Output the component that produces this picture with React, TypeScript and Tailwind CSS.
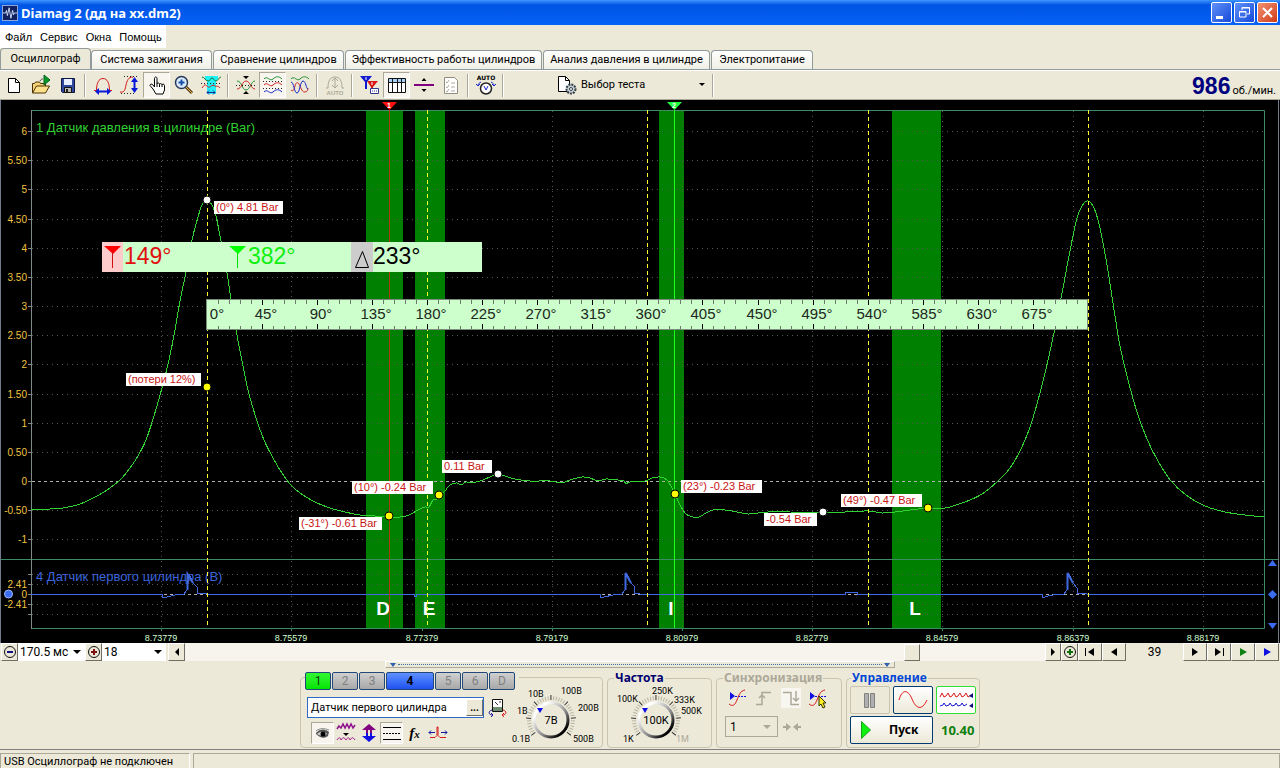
import React from "react";

const TABS = [
  { name: "Система зажигания", width: "w-[121px]" },
  { name: "Сравнение цилиндров", width: "w-[131px]" },
  { name: "Эффективность работы цилиндров", width: "w-[197px]" },
  { name: "Анализ давления в цилиндре", width: "w-[167px]" },
  { name: "Электропитание", width: "w-[102px]" },
];

const Y_TICKS = [
  { y: 131, label: "6" },
  { y: 160, label: "5.50" },
  { y: 189, label: "5" },
  { y: 219, label: "4.50" },
  { y: 248, label: "4" },
  { y: 277, label: "3.50" },
  { y: 306, label: "3" },
  { y: 335, label: "2.50" },
  { y: 364, label: "2" },
  { y: 394, label: "1.50" },
  { y: 423, label: "1" },
  { y: 452, label: "0.50" },
  { y: 481, label: "0" },
  { y: 510, label: "-0.50" },
  { y: 539, label: "-1" },
  { y: 574, label: "" },
  { y: 584, label: "2.41" },
  { y: 594, label: "0" },
  { y: 604, label: "-2.41" },
  { y: 614, label: "" },
];

const X_TICKS = [
  { x: 161, label: "8.73779" },
  { x: 291, label: "8.75579" },
  { x: 422, label: "8.77379" },
  { x: 552, label: "8.79179" },
  { x: 682, label: "8.80979" },
  { x: 812, label: "8.82779" },
  { x: 942, label: "8.84579" },
  { x: 1073, label: "8.86379" },
  { x: 1203, label: "8.88179" },
];

const BANDS = [
  { x: 366, w: 37, letter: "D", lx: 383 },
  { x: 415, w: 30, letter: "E", lx: 429 },
  { x: 659, w: 25, letter: "I", lx: 671 },
  { x: 892, w: 49, letter: "L", lx: 915 },
];

const CALLOUTS = [
  { x: 214, y: 201, w: 69, text: "(0°) 4.81 Bar", px: 207, py: 200, fill: "#fff" },
  { x: 126, y: 373, w: 75, text: "(потери 12%)", px: 207, py: 387, fill: "#ff0" },
  { x: 299, y: 517, w: 83, text: "(-31°) -0.61 Bar", px: 389, py: 516, fill: "#ff0" },
  { x: 352, y: 481, w: 81, text: "(10°) -0.24 Bar", px: 439, py: 495, fill: "#ff0" },
  { x: 442, y: 460, w: 50, text: "0.11 Bar", px: 498, py: 474, fill: "#fff" },
  { x: 681, y: 480, w: 81, text: "(23°) -0.23 Bar", px: 675, py: 494, fill: "#ff0" },
  { x: 764, y: 513, w: 53, text: "-0.54 Bar", px: 823, py: 512, fill: "#fff" },
  { x: 841, y: 494, w: 81, text: "(49°) -0.47 Bar", px: 928, py: 508, fill: "#ff0" },
];

const PRESSURE: number[][] = [
  [31, 510], [50, 509], [63, 508], [80, 504], [95, 497], [107, 490], [120, 480], [130, 468], [138, 456], [146, 440],
  [154, 416], [162, 388], [169, 360], [175, 330], [180, 301], [186, 272], [192, 240], [198, 217], [202, 205], [207, 200],
  [212, 205], [216, 216], [221, 241], [227, 273], [231, 299], [237, 335], [242, 361], [248, 390], [256, 418], [264, 440],
  [272, 456], [280, 470], [290, 484], [300, 493], [315, 502], [330, 508], [345, 512], [360, 515], [375, 516], [389, 517],
  [400, 517], [409, 515], [418, 510], [425, 507], [429, 507], [433, 500], [437, 499], [440, 495], [445, 491], [448, 487],
  [452, 484], [457, 483], [461, 485], [466, 482], [470, 483], [480, 481], [490, 477], [498, 474], [505, 476], [515, 479],
  [530, 481], [550, 481], [562, 483], [570, 480], [582, 477], [590, 478], [598, 481], [606, 479], [618, 480], [624, 481],
  [626, 484], [630, 482], [645, 481], [652, 478], [660, 477], [667, 480], [674, 492], [680, 505], [686, 514], [693, 517],
  [699, 517], [706, 513], [713, 510], [725, 510], [737, 512], [748, 514], [758, 513], [768, 512], [790, 512], [823, 513],
  [845, 512], [868, 511], [882, 513], [895, 512], [910, 510], [928, 508], [945, 508], [965, 502], [982, 494], [998, 481],
  [1010, 468], [1020, 451], [1029, 430], [1037, 404], [1046, 369], [1055, 328], [1063, 288], [1069, 256], [1076, 222],
  [1082, 206], [1088, 201], [1094, 208], [1100, 228], [1107, 265], [1113, 303], [1120, 346], [1128, 380], [1137, 412],
  [1147, 439], [1158, 461], [1171, 481], [1186, 495], [1205, 506], [1225, 512], [1245, 515], [1264, 517],
];

const PULSES =
  "M31 594H162V598L167 597L175 595L184 594L187 590V574H189L193 583L197 587V593H206L207 594H414V596H416V594H600V598L604 597L613 595L622 594L625 590V573L627 574L631 583L634 586V593H639L640 594H845V592H857V594H1042V598L1048 596L1058 594H1064L1067 590V573L1069 574L1073 583L1077 588V593H1086L1087 594H1264";

// Catmull-Rom through the samples
const smooth = (p: number[][]) => {
  let d = `M${p[0][0]} ${p[0][1]}`;
  for (let i = 0; i < p.length - 1; i++) {
    const a = p[i - 1] || p[i];
    const b = p[i];
    const c = p[i + 1];
    const e = p[i + 2] || c;
    d += `C${b[0] + (c[0] - a[0]) / 6} ${b[1] + (c[1] - a[1]) / 6} ${c[0] - (e[0] - b[0]) / 6} ${c[1] - (e[1] - b[1]) / 6} ${c[0]} ${c[1]}`;
  }
  return d;
};

const Icon: React.FC<{ children: React.ReactNode }> = ({ children }) => (
  <svg viewBox="0 0 20 20" className="h-5 w-5 shrink-0 overflow-visible" fill="none" aria-hidden="true">
    {children}
  </svg>
);

const ToolButton: React.FC<{ label: string; pressed?: boolean; children: React.ReactNode }> = ({
  label,
  pressed,
  children,
}) => (
  <button
    type="button"
    aria-label={label}
    className={
      pressed
        ? "flex h-[26px] w-[27px] items-center justify-center border border-[#aca899] border-r-white border-b-white bg-[#f7f5ee]"
        : "flex h-[26px] w-[27px] items-center justify-center"
    }
  >
    <Icon>{children}</Icon>
  </button>
);

const Separator = () => (
  <div className="flex w-2 justify-center pt-0.5">
    <div className="h-[23px] w-[2px] border-l border-[#aca899] border-r border-r-white" />
  </div>
);

const Toolbar = () => (
  <div className="flex h-[30px] items-start border-t border-white border-b border-b-[#aca899] pt-px">
    <ToolButton label="Новый">
      <path d="M4.500 3.500h7l4 4v10h-11z" fill="#fff" stroke="#000" />
      <path d="M11.500 3.500v4h4" stroke="#000" />
    </ToolButton>
    <ToolButton label="Открыть">
      <path d="M1.500 18V8.500h2l1-1.500h4l1 1.500h5V11" fill="#f5d27a" stroke="#4a3200" />
      <path d="M1.500 18l4-7h13l-4 7z" fill="#ffe08a" stroke="#4a3200" />
      <path d="M13 0v10l6-5z" fill="#0a9a28" stroke="#04601a" />
      <path d="M9 6c1-2 2-2 3-2" stroke="#444" />
    </ToolButton>
    <ToolButton label="Сохранить">
      <path d="M3.500 3.500h13v14h-12l-1-1z" fill="#3048a0" stroke="#101840" />
      <path d="M6 4h8v6H6z" fill="#e8f0ff" />
      <path d="M6.500 12.500h7v5h-7z" fill="#b8b8b0" stroke="#111" />
      <path d="M8 14h2v3H8z" fill="#222" />
    </ToolButton>
    <Separator />
    <ToolButton label="Ширина">
      <path d="M1 15.500h2.500c0-7 2-12 6.500-12s6.500 5 6.500 12H19" stroke="#d81818" />
      <path d="M5 16.500h10" stroke="#0818d8" strokeWidth="2" />
      <path d="M6 13v7l-4-3.500zM14 13v7l4-3.500z" fill="#0818d8" />
    </ToolButton>
    <ToolButton label="Амплитуда">
      <path d="M4 1.500h13M1 18.500h15" stroke="#222" strokeDasharray="1 2" />
      <path d="M0 17c5 1 5-3 6-7s2-8 7-8" stroke="#d81818" />
      <path d="M14.500 5v10" stroke="#0818d8" strokeWidth="2" />
      <path d="M11 7h7l-3.500-5zM11 13h7l-3.500 5z" fill="#0818d8" />
    </ToolButton>
    <ToolButton label="Рука" pressed>
      <path
        d="M7.500 12V3.500c0-2 2.500-2 2.500 0V9c0-1.500 2.500-1.500 2.500.5 0-1.500 2.500-1 2.500.5 0-1.500 2.500-1 2.500.5v4.500l-1.500 4h-7l-3-5-3-3.500c0-2 2-1.500 3-.5z"
        fill="#fff"
        stroke="#000"
      />
      <path d="M10 9v3m2.500-2.500V12m2.500-2v2" stroke="#000" />
    </ToolButton>
    <ToolButton label="Масштаб">
      <path d="M12 12l6 6" stroke="#5a3c10" strokeWidth="3" />
      <path d="M12 12l6 6" stroke="#e8b850" />
      <circle cx="7.500" cy="7.500" r="6" fill="#dcecff" stroke="#283858" strokeWidth="1.500" />
      <path d="M4.500 7.500h6m-3-3v6" stroke="#1850a8" strokeWidth="2" />
    </ToolButton>
    <ToolButton label="Область">
      <path d="M4 1h13v3l-2 2v13H6V6L4 4z" fill="#20f0f8" />
      <path d="M1 2c3 0 3 4 6 4s2-3 4-3 2 3 4 3 3-4 5-4" stroke="#107830" />
      <path d="M0 8.500h20" stroke="#222" strokeDasharray="1 2" />
      <path d="M1 13c2-3 3-4 5-2s3 1 4 0 3-1 4 0 3-1 5 2" stroke="#c82020" />
      <path d="M6 17.500h8m-6-2l-2 2 2 2m4-4l2 2-2 2" stroke="#202898" />
    </ToolButton>
    <Separator />
    <ToolButton label="Совместить">
      <path d="M7 1h6l-3 3zM7 19h6l-3-3z" fill="#000" />
      <path d="M1 6c5 0 5 9 9 9s5-9 9-9" stroke="#209030" />
      <path d="M1 14c5 0 5-8 9-8s5 8 9 8" stroke="#d02020" />
      <path d="M0 10.500h20" stroke="#222" strokeDasharray="1 2" />
    </ToolButton>
    <ToolButton label="Разнести" pressed>
      <path d="M1 4c3-4 6 3 9 0s6-3 9 0" stroke="#209030" />
      <path d="M0 6.500h20M0 13.500h20" stroke="#222" strokeDasharray="1 2" />
      <path d="M1 10c3-4 6 3 9 0s6-3 9 0" stroke="#d02020" />
      <path d="M1 17c3-4 6 3 9 0s6-3 9 0" stroke="#1828c8" />
    </ToolButton>
    <ToolButton label="Наложить">
      <path d="M1 4c3-4 6 3 9 0s6-3 9 0" stroke="#209030" />
      <path d="M1 15c2 2 3 0 4-4s3-5 5 0 3 6 5 6 3-2 3-4" stroke="#d02020" />
      <path d="M1 7c3 0 3 11 6 11s3-12 6-12 3 8 5 8" stroke="#1828c8" />
    </ToolButton>
    <Separator />
    <ToolButton label="Авто">
      <path d="M1 13h2C3 6 5 2 10 2s7 4 7 11h2M10 4v9M7 6l3-3 3 3M7 10l3 3 3-3" stroke="#aca899" />
      <text x="10" y="20" fontSize="6" fontWeight="bold" fill="#aca899" textAnchor="middle" fontFamily="Liberation Sans, sans-serif">
        AUTO
      </text>
    </ToolButton>
    <Separator />
    <ToolButton label="Маркеры">
      <path d="M0 1h12L7 7v7H5V7z" fill="#1018d0" />
      <path d="M7 6h11l-5 6v4h-2v-4z" fill="#d81818" />
      <path d="M6 2v3M12 7v3" stroke="#fff" />
      <path d="M10.500 13.500h8v5h-8z" fill="#fff" stroke="#303890" />
      <path d="M12 16h5" stroke="#303890" strokeDasharray="1 1" />
    </ToolButton>
    <ToolButton label="Таблица" pressed>
      <path d="M1.500 3.500h17v14h-17z" fill="#fff" stroke="#111" />
      <path d="M2 4h16v3H2z" fill="#a8d0f8" />
      <path d="M1.500 7.500h17M5.500 4v13M10.500 4v13M14.500 4v13" stroke="#111" />
    </ToolButton>
    <ToolButton label="Линия">
      <path d="M0 10h20" stroke="#800080" strokeWidth="2" />
      <path d="M7.500 6h5L10 3zM7.500 14h5L10 17z" fill="#000" />
    </ToolButton>
    <ToolButton label="Отчёт">
      <path d="M3.500 2.500h10l3 3v13h-13z" fill="#fff" stroke="#908c80" />
      <path d="M5 7l1 1 2-3M5 12l1 1 2-3M5 16l1 1 2-3M10 8h4M10 12h4M10 16h4" stroke="#b0ac9c" />
    </ToolButton>
    <Separator />
    <ToolButton label="Автоматически">
      <text x="10" y="5" fontSize="6" fontWeight="bold" textAnchor="middle" fill="#000" fontFamily="DejaVu Sans, sans-serif">
        AUTO
      </text>
      <circle cx="10" cy="13.500" r="5.500" fill="#fff" stroke="#222" strokeWidth="1.500" />
      <path d="M8 11l2 4 2-4" stroke="#1828c8" />
      <path d="M2 11c0-2 1-3 3-4m13 4c0-2-1-3-3-4M0 9l2 2 2-2m12 0l2 2 2-2" stroke="#1828c8" />
    </ToolButton>
    <Separator />
    <button type="button" className="ml-[50px] flex h-[26px] w-[152px] items-center gap-1 pr-1">
      <Icon>
        <path d="M1.500 1.500h7l4 4v11h-11z" fill="#fff" stroke="#000" />
        <path d="M8.500 1.500v4h4" stroke="#000" />
        <circle cx="14" cy="14" r="4.500" fill="#c8d0d4" stroke="#304048" strokeWidth="2" strokeDasharray="2 1" />
        <circle cx="14" cy="14" r="1.500" fill="#fff" stroke="#304048" />
      </Icon>
      <span>Выбор теста</span>
      <svg viewBox="0 0 6 4" className="ml-auto h-1 w-1.5">
        <path d="M0 0h6L3 3z" />
      </svg>
    </button>
    <Separator />
    <div className="ml-auto flex items-baseline gap-[2px] pt-0.5 pr-1">
      <output className="font-['Liberation_Sans',sans-serif] text-[23px] leading-6 font-bold text-[#000080]">986</output>
      <span>об./мин.</span>
    </div>
  </div>
);

const Chart = () => (
  <svg
    viewBox="0 100 1280 543"
    className="block h-auto w-full bg-black font-['Liberation_Sans',Arial,sans-serif]"
    role="img"
    aria-label="Осциллограмма"
  >
    <path d="M0.500 100V643M1278.500 100V643" stroke="#707c8c" />
    {BANDS.map((b) => (
      <rect key={b.letter} x={b.x} y="111" width={b.w} height="517" fill="#008000" />
    ))}

    {/* grid */}
    {Y_TICKS.map((t) => (
      <g key={t.y}>
        <path
          d={`M32 ${t.y + 0.5}H1264`}
          stroke={t.y === 481 || t.y === 594 ? "#b0b0b0" : "#505850"}
          strokeDasharray={t.y === 481 || t.y === 594 ? "3 3" : "1 4"}
        />
        <path d={`M28 ${t.y + 0.5}h4`} stroke="#808a86" />
        <text x="27" y={t.y + 4} fontSize="10" fill="#f0c440" textAnchor="end">
          {t.label}
        </text>
      </g>
    ))}
    {X_TICKS.map((t) => (
      <g key={t.x}>
        <path d={`M${t.x + 0.5} 111V628`} stroke="#505850" strokeDasharray="1 4" />
        <path d={`M${t.x + 0.5} 628v3`} stroke="#3c8c64" />
        <text x={t.x} y="641" fontSize="9" fill="#d0ffd0" textAnchor="middle">
          {t.label}
        </text>
      </g>
    ))}
    <path d="M31 110.500H1264.500V628.500H31M1 559.500H1278" stroke="#3c8c64" fill="none" />
    <path d="M31.500 110V629" stroke="#808a86" />

    {/* channel names */}
    <text x="36" y="132" fontSize="13" fill="#32d232">
      1 Датчик давления в цилиндре (Bar)
    </text>
    <text x="36" y="581" fontSize="13" fill="#3c64dc">
      4 Датчик первого цилиндра (В)
    </text>

    <path d={smooth(PRESSURE)} stroke="#32d232" fill="none" shapeRendering="crispEdges" />
    <path d={PULSES} stroke="#4169e1" fill="none" shapeRendering="crispEdges" />
    <path
      d="M187.500 590V574L193 583M625.500 590V573L631 583M1067.500 590V573L1073 583"
      stroke="#4169e1"
      strokeWidth="2"
      fill="none"
    />

    {BANDS.map((b) => (
      <text key={b.letter} x={b.lx} y="615" fontSize="19" fontWeight="bold" fill="#fff" textAnchor="middle">
        {b.letter}
      </text>
    ))}

    {[207, 427, 647, 868, 1088].map((x) => (
      <path key={x} d={`M${x + 0.5} 110V628`} stroke="#ffff30" strokeDasharray="4 3" shapeRendering="crispEdges" />
    ))}

    {/* cursors */}
    <path d="M389.500 110V628" stroke="#b03808" shapeRendering="crispEdges" />
    <path d="M674.500 110V628" stroke="#20ff20" shapeRendering="crispEdges" />
    <path d="M382 102h15l-7.500 8z" fill="#ff1010" />
    <path d="M667 102h15l-7.500 8z" fill="#20ff40" />
    <text x="389" y="108" fontSize="7" fontWeight="bold" fill="#fff" textAnchor="middle">
      1
    </text>
    <text x="674" y="108" fontSize="7" fontWeight="bold" fill="#fff" textAnchor="middle">
      2
    </text>

    {CALLOUTS.map((c) => (
      <g key={c.text}>
        <rect x={c.x} y={c.y} width={c.w} height="13" fill="#fff" />
        <text x={c.x + 2} y={c.y + 10} fontSize="11" fill="#c81414">
          {c.text}
        </text>
        <circle cx={c.px} cy={c.py} r="4" fill={c.fill} stroke="#000" />
      </g>
    ))}

    {/* cursor readout */}
    <rect x="102" y="242" width="380" height="30" fill="#ccffcc" />
    <rect x="102" y="242" width="21" height="30" fill="#ffcccc" />
    <rect x="351" y="242" width="22" height="30" fill="#cccccc" />
    <path d="M104 246h17l-8 8z" fill="#ff0000" />
    <path d="M112.500 252v16" stroke="#d01010" />
    <path d="M229 246h17l-8 8z" fill="#00ff00" />
    <path d="M237.500 252v16" stroke="#00e000" />
    <path d="M355.500 267.500h13l-6-16z" stroke="#000" fill="none" />
    <text x="124" y="264" fontSize="23" fill="#e01010">
      149°
    </text>
    <text x="248" y="264" fontSize="23" fill="#10f010">
      382°
    </text>
    <text x="373" y="264" fontSize="23" fill="#000">
      233°
    </text>

    {/* degree ruler */}
    <rect x="206.500" y="299.500" width="881" height="30" fill="#ccffcc" stroke="#7c8c7c" />
    {Array.from({ length: 79 }, (_, i) => {
      const x = Math.round(207 + (i + 1) * 11.01) + 0.5;
      const major = (i + 1) % 5 === 0;
      return (
        <path
          key={i}
          d={major ? `M${x} 300v5M${x} 324v5` : `M${x} 300v4M${x} 326v3`}
          stroke={major ? "#000" : "#6c7c6c"}
        />
      );
    })}
    {Array.from({ length: 16 }, (_, i) => (
      <text
        key={i}
        x={i === 0 ? 217 : Math.round(207 + i * 55.05) + 4}
        y="319"
        fontSize="15"
        fill="#202820"
        textAnchor="middle"
      >
        {i * 45}°
      </text>
    ))}

    {/* channel offset handles */}
    <circle cx="8.500" cy="594" r="4" fill="#3c6cf0" stroke="#a0b8f8" />
    <path d="M1268 566h9l-4.500-6zM1268 623h9l-4.500 6zM1268 594.500l4.500-4.500 4.500 4.500-4.500 4.500z" fill="#3c6cf0" />
  </svg>
);

const NavButton: React.FC<{ label: string; width: string; d: string; fill?: string }> = ({
  label,
  width,
  d,
  fill = "#000",
}) => (
  <button
    type="button"
    aria-label={label}
    className={`flex h-[18px] ${width} items-center justify-center border border-white border-r-[#716f64] border-b-[#716f64] bg-[#ece9d8]`}
  >
    <svg viewBox="0 0 10 10" className="h-2.5 w-2.5 shrink-0" fill={fill}>
      <path d={d} />
    </svg>
  </button>
);

const ZoomButton: React.FC<{ label: string; color: string; d: string }> = ({ label, color, d }) => (
  <button
    type="button"
    aria-label={label}
    className="flex h-[18px] w-[17px] items-center justify-center border border-white border-r-[#716f64] border-b-[#716f64] bg-[#ece9d8]"
  >
    <svg viewBox="0 0 14 14" className="h-3.5 w-3.5 shrink-0" fill="none">
      <circle cx="7" cy="7" r="5.500" stroke="#111" />
      <path d={d} stroke={color} strokeWidth="2" />
    </svg>
  </button>
);

const ComboBox: React.FC<{ label: string; value: string; width: string }> = ({ label, value, width }) => (
  <div className={`grid h-[18px] ${width} items-center bg-white`}>
    <select aria-label={label} className="col-start-1 row-start-1 h-full w-full appearance-none bg-transparent pl-[2px] text-[12px]">
      <option>{value}</option>
    </select>
    <svg viewBox="0 0 8 4" className="pointer-events-none col-start-1 row-start-1 mr-1 h-1 w-2 justify-self-end">
      <path d="M0 0h8L4 4z" />
    </svg>
  </div>
);

const TimeBar = () => (
  <div className="flex h-[18px] items-center pl-px">
    <ZoomButton label="Уменьшить" color="#101080" d="M4 7h6" />
    <ComboBox label="Развёртка" value="170.5 мс" width="w-[67px]" />
    <ZoomButton label="Увеличить" color="#801010" d="M4 7h6M7 4v6" />
    <ComboBox label="Масштаб" value="18" width="w-[64px]" />
    <div className="w-[2px]" />
    <NavButton label="Влево" width="w-[17px]" d="M7 1v8L3 5z" />
    <input
      type="range"
      aria-label="Прокрутка"
      min="0"
      max="1000"
      defaultValue="852"
      className="h-[18px] min-w-0 flex-1 appearance-none bg-[#f6f4ec] [&::-webkit-slider-thumb]:h-[17px] [&::-webkit-slider-thumb]:w-4 [&::-webkit-slider-thumb]:appearance-none [&::-webkit-slider-thumb]:border [&::-webkit-slider-thumb]:border-white [&::-webkit-slider-thumb]:border-r-[#716f64] [&::-webkit-slider-thumb]:border-b-[#716f64] [&::-webkit-slider-thumb]:bg-[#ece9d8]"
    />
    <NavButton label="Вправо" width="w-4" d="M3 1v8l4-4z" />
    <ZoomButton label="Добавить" color="#107010" d="M4 7h6M7 4v6" />
    <NavButton label="В начало" width="w-6" d="M0 1h1v8H0zM9 1v8L3 5z" />
    <NavButton label="Назад" width="w-6" d="M8 1v8L2 5z" />
    <output className="w-[57px] text-center text-[12px]">39</output>
    <NavButton label="Вперёд" width="w-6" d="M2 1v8l6-4z" />
    <NavButton label="В конец" width="w-6" d="M9 1h1v8H9zM1 1v8l6-4z" />
    <NavButton label="Воспроизвести" width="w-6" d="M2 1v8l7-4z" fill="#108010" />
    <NavButton label="Запись" width="w-6" d="M2 1v8l7-4z" fill="#1010e0" />
    <div className="w-px" />
  </div>
);

const CHANNELS = [
  { name: "1", style: "w-[26px] bg-linear-to-b from-[#30f830] to-[#00e400] text-[#084008]" },
  { name: "2", style: "w-[26px] bg-linear-to-b from-[#d0d0d0] to-[#a8a8a8] text-[#808080]" },
  { name: "3", style: "w-[26px] bg-linear-to-b from-[#d0d0d0] to-[#a8a8a8] text-[#808080]" },
  { name: "4", style: "w-12 bg-linear-to-b from-[#6090ff] to-[#2050f0] font-bold text-black" },
  { name: "5", style: "w-[26px] bg-linear-to-b from-[#d0d0d0] to-[#a8a8a8] text-[#808080]" },
  { name: "6", style: "w-[26px] bg-linear-to-b from-[#d0d0d0] to-[#a8a8a8] text-[#808080]" },
  { name: "D", style: "w-[26px] bg-linear-to-b from-[#d0d0d0] to-[#a8a8a8] text-[#808080]" },
];

type Mark = { x: number; y: number; text: string; muted?: boolean };

const Knob: React.FC<{ cx: number; cy: number; value: string; marks: Mark[]; label: string; className: string; box: string }> = ({
  cx,
  cy,
  value,
  marks,
  label,
  className,
  box,
}) => (
  <svg viewBox={box} className={className} role="img" aria-label={label} fontSize="9">
    <defs>
      <linearGradient id={`rim-${value}`} x1="0" y1="0" x2="1" y2="1">
        <stop offset="0.200" stopColor="#fff" />
        <stop offset="0.600" stopColor="#888" />
        <stop offset="0.850" stopColor="#000" />
      </linearGradient>
    </defs>
    {Array.from({ length: 37 }, (_, i) => (
      <path
        key={i}
        d={`M${cx + 20} ${cy}h${i % 6 === 0 ? 5 : 4}`}
        stroke={i % 6 === 0 ? "#333" : "#b8b4a4"}
        transform={`rotate(${142 + i * 7.1} ${cx} ${cy})`}
      />
    ))}
    <circle cx={cx} cy={cy} r="17" fill="#ece9d8" stroke={`url(#rim-${value})`} strokeWidth="3" />
    <path d={`M${cx - 14} ${cy - 12}h6l-3 5z`} fill="#1010e0" />
    <text x={cx} y={cy + 4} fontSize="11" textAnchor="middle">
      {value}
    </text>
    {marks.map((m) => (
      <text key={m.text} x={m.x} y={m.y} fill={m.muted ? "#aca899" : "#000"}>
        {m.text}
      </text>
    ))}
  </svg>
);

const ChannelGroup = () => (
  <fieldset className="flex h-[76px] w-[303px] justify-between rounded border border-[#c8c4b0]">
    <legend className="ml-1 h-2.5 pr-1">
      <span className="flex gap-px">
        {CHANNELS.map((c) => (
          <button key={c.name} type="button" className={`h-[18px] rounded-xs border border-[#204878] text-[12px] leading-4 ${c.style}`}>
            {c.name}
          </button>
        ))}
      </span>
    </legend>
    <div className="flex flex-col gap-1 pt-[15px] pl-1.5">
      <div className="flex items-center gap-1">
        <div className="flex h-[21px] w-[177px] items-center border border-[#316ac5] bg-white">
          <input
            aria-label="Название канала"
            defaultValue="Датчик первого цилиндра"
            className="h-full min-w-0 flex-1 bg-transparent pl-[3px] outline-none"
          />
          <button
            type="button"
            aria-label="Выбрать датчик"
            className="h-[17px] w-[17px] border border-white border-r-[#716f64] border-b-[#716f64] bg-[#ece9d8] text-[10px] leading-2 font-bold"
          >
            ...
          </button>
        </div>
        <button type="button" aria-label="Сменить прибор">
          <Icon>
            <path d="M4.500 1.500h10v12h-10z" fill="#fff" stroke="#111" />
            <path d="M5 9h9v4H5z" fill="#708c70" />
            <path d="M7 4l3 3M11 4h2" stroke="#333" />
            <path d="M4 12c-4 1-4 5 1 5m-2-2l2 2-2 2" stroke="#1818a0" />
            <path d="M15 12c4 1 4 5-1 5m2-2l-2 2 2 2" stroke="#d81818" />
          </Icon>
        </button>
      </div>
      <div className="flex pl-1">
        <button
          type="button"
          aria-label="Показать"
          className="flex h-[22px] w-[23px] items-center justify-center border border-[#aca899] border-r-white border-b-white bg-[#f7f5ee]"
        >
          <Icon>
            <path d="M3 10c4-5 10-4 13-1l-1 4c-4 3-8 2-12-2z" fill="#555" />
            <path d="M4 11c3-3 8-3 10 0-3 3-7 2-10 0z" fill="#ccc" />
            <circle cx="10" cy="11" r="2.500" fill="#000" />
            <path d="M3 8c4-3 8-3 13-1" stroke="#888" />
          </Icon>
        </button>
        <button type="button" aria-label="Фильтр" className="flex h-[22px] w-[23px] items-center justify-center">
          <Icon>
            <path d="M1 6l2-3 2 2 2-4 2 4 2-4 2 4 2-4 2 4 2-3" stroke="#901090" strokeWidth="1.500" />
            <path d="M7 10h6l-3 3z" fill="#000" />
            <path d="M1 17c2-3 3-3 4 0 2-3 3-3 5 0 2-3 3-3 4 0 2-3 3-3 5 0" stroke="#a01890" />
          </Icon>
        </button>
        <button type="button" aria-label="Инверсия" className="flex h-[22px] w-[23px] items-center justify-center">
          <Icon>
            <path d="M10 1l7 6h-4v3H7V7H3z" fill="#800080" />
            <path d="M10 19l7-6h-4v-3H7v3H3z" fill="#1010e0" />
            <path d="M10 7v6" stroke="#ece9d8" strokeWidth="2" />
          </Icon>
        </button>
        <button
          type="button"
          aria-label="Линии"
          className="flex h-[22px] w-[23px] items-center justify-center border border-[#aca899] border-r-white border-b-white bg-[#f7f5ee]"
        >
          <Icon>
            <path d="M1 4.500h18M1 16.500h18" stroke="#000" />
            <path d="M1 10.500h18" stroke="#000" strokeDasharray="2 1" />
          </Icon>
        </button>
        <button type="button" className="h-[22px] w-[23px] font-['Liberation_Serif',serif] text-[15px] leading-5 font-bold italic">
          f<span className="text-[11px]">x</span>
        </button>
        <button type="button" aria-label="Синхроимпульс" className="flex h-[22px] w-[23px] items-center justify-center">
          <Icon>
            <path d="M2 14.500h5l2-2V4h1v8.500l2 2h6" stroke="#d81818" />
            <path d="M1 9.500h6m-4-2l-2 2 2 2M19 9.500h-6m4-2l2 2-2 2" stroke="#1018a0" />
          </Icon>
        </button>
      </div>
    </div>
    <Knob
      label="Диапазон"
      value="7В"
      cx={551}
      cy={721}
      box="510 684 92 62"
      className="mt-px h-[62px] w-[92px] overflow-visible"
      marks={[
        { x: 512, y: 743, text: "0.1В" },
        { x: 517, y: 715, text: "1В" },
        { x: 528, y: 698, text: "10В" },
        { x: 561, y: 695, text: "100В" },
        { x: 578, y: 712, text: "200В" },
        { x: 573, y: 743, text: "500В" },
      ]}
    />
  </fieldset>
);

const FrequencyGroup = () => (
  <fieldset className="h-[76px] w-[105px] rounded border border-[#c8c4b0]">
    <legend className="ml-1.5 h-3 px-px font-['Noto_Sans',sans-serif] text-[12px] leading-3 font-bold text-[#000070]">Частота</legend>
    <Knob
      label="Частота"
      value="100K"
      cx={656}
      cy={721}
      box="608 685 103 62"
      className="h-[62px] w-[103px] overflow-visible"
      marks={[
        { x: 623, y: 743, text: "1K" },
        { x: 617, y: 703, text: "100K" },
        { x: 652, y: 695, text: "250K" },
        { x: 674, y: 704, text: "333K" },
        { x: 681, y: 715, text: "500K" },
        { x: 676, y: 743, text: "1M", muted: true },
      ]}
    />
  </fieldset>
);

const SyncGroup = () => (
  <fieldset className="h-[76px] w-[126px] rounded border border-[#c8c4b0]">
    <legend className="ml-1.5 h-3 px-px font-['Noto_Sans',sans-serif] text-[12px] leading-3 font-bold text-[#aca899]">Синхронизация</legend>
    <div className="flex gap-[7px] pt-1 pl-2.5">
      <button type="button" aria-label="Уровень" className="h-5 w-5">
        <Icon>
          <path d="M3 4v8l5-4z" fill="#1010e0" />
          <path d="M8 8.500h11" stroke="#1010e0" strokeDasharray="2 1" />
          <path d="M2 16c4 3 6 1 8-4s3-9 8-10" stroke="#d81818" />
        </Icon>
      </button>
      <button type="button" aria-label="По фронту" disabled className="h-5 w-5">
        <Icon>
          <path d="M2 16.500h6v-12h9M8 7l-3 3M8 7l3 3" stroke="#aca899" strokeWidth="1.500" />
        </Icon>
      </button>
      <button type="button" aria-label="По спаду" disabled className="h-5 w-5 bg-[#f8f6f0]">
        <Icon>
          <path d="M2 4.500h8v12h8M15 3v10M12 10l3 3 3-3" stroke="#aca899" strokeWidth="1.500" />
        </Icon>
      </button>
      <button type="button" aria-label="Указать уровень" className="h-5 w-5">
        <Icon>
          <path d="M2 4v8l5-4z" fill="#1010e0" />
          <path d="M7 8.500h11" stroke="#1010e0" strokeDasharray="2 1" />
          <path d="M1 16c4 3 6 1 8-4s3-9 8-10" stroke="#d81818" />
          <path d="M11 8v10l2-2 2 4 2-1-2-4h3z" fill="#ffee20" stroke="#303000" />
        </Icon>
      </button>
    </div>
    <div className="flex items-center gap-1 pt-2 pl-2">
      <div className="grid h-[21px] w-[53px] items-center border border-[#aca899]">
        <select
          aria-label="Канал синхронизации"
          className="col-start-1 row-start-1 h-full w-full appearance-none bg-transparent pl-1 text-[12px]"
        >
          <option>1</option>
        </select>
        <svg viewBox="0 0 8 4" className="pointer-events-none col-start-1 row-start-1 mr-1.5 h-1 w-2 justify-self-end" fill="#aca899">
          <path d="M0 0h8L4 4z" />
        </svg>
      </div>
      <button type="button" aria-label="Сжать" disabled className="h-5 w-5">
        <Icon>
          <path d="M1 9h3V6l5 4-5 4v-3H1zM19 9h-3V6l-5 4 5 4v-3h3z" fill="#aca899" />
        </Icon>
      </button>
    </div>
  </fieldset>
);

const ControlGroup = () => (
  <fieldset className="h-[76px] w-[134px] rounded border border-[#c8c4b0]">
    <legend className="ml-1 h-3 px-px font-['Noto_Sans',sans-serif] text-[12px] leading-3 font-bold text-[#0046d5]">Управление</legend>
    <div className="flex flex-col gap-[2px] pt-[2px] pl-[3px]">
      <div className="flex gap-[3px]">
        <button type="button" aria-label="Пауза" className="flex h-7 w-10 items-center justify-center rounded-xs border border-[#c8c4b0]">
          <svg viewBox="0 0 12 15" className="h-[15px] w-3">
            <path d="M0.500 0.500h4v14h-4zM6.500 0.500h4v14h-4z" fill="#b0b0b0" stroke="#808080" />
          </svg>
        </button>
        <button
          type="button"
          aria-label="Осциллограмма"
          className="flex h-7 w-10 items-center justify-center rounded-xs border border-[#003c74] bg-linear-to-b from-white to-[#ece9d8]"
        >
          <svg viewBox="0 0 30 20" className="h-5 w-[30px]" fill="none">
            <path d="M1 10C4-1 10-1 14 9s10 12 15 1" stroke="#e01818" />
          </svg>
        </button>
        <button
          type="button"
          aria-label="Запись сигналов"
          className="flex h-7 w-10 items-center justify-center rounded-xs border border-[#30e030] bg-white"
        >
          <svg viewBox="0 0 34 20" className="h-5 w-[34px]" fill="none">
            <path d="M1 7l2-4 2 4 2-1 2-3 2 4 2-1 2-3 2 4 2-1 2-3 2 4 2-1 2-3 2 4 3-2" stroke="#d81818" />
            <path d="M1 16l3-1 1-2 2 3 3-1 1-2 2 3 3-1 1-2 2 3 3-1 1-2 2 3 3-2" stroke="#1818d0" />
            <path d="M34 3v5l-4-2zM34 13v5l-4-2z" fill="#101080" />
          </svg>
        </button>
      </div>
      <div className="flex items-center gap-2">
        <button
          type="button"
          className="flex h-7 w-[83px] items-center rounded-xs border border-[#003c74] bg-linear-to-b from-white to-[#ece9d8] pl-2.5 font-['Noto_Sans',sans-serif] text-[12px] font-bold"
        >
          <svg viewBox="0 0 10 18" className="mr-[18px] h-[18px] w-2.5">
            <path d="M0.500 0.500v17l9-8.500z" fill="#10f010" stroke="#18a018" />
          </svg>
          Пуск
        </button>
        <output className="font-['Noto_Sans',sans-serif] text-[13px] font-bold text-[#108010]">10.40</output>
      </div>
    </div>
  </fieldset>
);

const App: React.FC = () => {
  return (
    <div className="flex min-h-screen flex-col bg-[#ece9d8] font-['Roboto','Liberation_Sans',sans-serif] text-[11px] leading-4 text-black">
      {/* title */}
      <header className="flex h-[25px] items-center gap-[3px] bg-linear-to-b from-[#3d95ff] via-[#0054e3] via-20% to-[#0562f8] pr-[2px] pl-[2px]">
        <svg viewBox="0 0 16 16" className="h-4 w-4 border border-[#8ca8d8] bg-[#102060]" fill="none">
          <path d="M0 8h3l1-3 1 6 2-9 2 12 2-9 1 5 1-2h3" stroke="#dce8ff" />
        </svg>
        <h1 className="font-['Noto_Sans',sans-serif] text-[13px] font-bold text-white">Diamag 2 (дд на хх.dm2)</h1>
        <div className="ml-auto flex gap-[2px]">
          <button type="button" aria-label="Свернуть" className="h-[21px] w-[21px] rounded-xs border border-white bg-linear-to-br from-[#6090f8] to-[#1848d8]">
            <svg viewBox="0 0 19 19">
              <path d="M4 13h7v3H4z" fill="#fff" />
            </svg>
          </button>
          <button type="button" aria-label="Восстановить" className="h-[21px] w-[21px] rounded-xs border border-white bg-linear-to-br from-[#6090f8] to-[#1848d8]">
            <svg viewBox="0 0 19 19" fill="none" stroke="#fff">
              <path d="M7 7V4.500h7.500V11H12M4.500 8.500H11V14H4.500zM7 5h8M4 9h7" />
            </svg>
          </button>
          <button type="button" aria-label="Закрыть" className="h-[21px] w-[21px] rounded-xs border border-white bg-linear-to-br from-[#f09070] to-[#d03810]">
            <svg viewBox="0 0 19 19">
              <path d="M5 5l9 9M14 5l-9 9" stroke="#fff" strokeWidth="2" />
            </svg>
          </button>
        </div>
      </header>

      {/* menu */}
      <nav className="flex h-[23px] w-[166px] items-center gap-2 bg-white pl-[5px] font-['Liberation_Sans',sans-serif]">
        <button type="button">Файл</button>
        <button type="button">Сервис</button>
        <button type="button">Окна</button>
        <button type="button">Помощь</button>
      </nav>

      {/* tabs */}
      <div role="tablist" className="flex h-[22px] items-end border-b border-[#919b9c]">
        <button type="button" role="tab" aria-selected="true" className="h-[21px] w-[91px] rounded-t-sm border border-b-0 border-[#919b9c] bg-[#ece9d8]">
          Осциллограф
        </button>
        <div className="flex gap-px">
          {TABS.map((t) => (
            <button
              key={t.name}
              type="button"
              role="tab"
              aria-selected="false"
              className={`h-[19px] whitespace-nowrap rounded-t-sm border border-b-0 border-[#919b9c] bg-linear-to-b from-white to-[#f0efe6] ${t.width}`}
            >
              {t.name}
            </button>
          ))}
        </div>
      </div>

      <Toolbar />
      <Chart />
      <TimeBar />

      {/* splitter */}
      <div className="mx-auto flex h-[7px] w-[510px] items-center justify-between border border-[#aca899] border-t-white border-l-white px-1">
        <svg viewBox="0 0 6 4" className="h-1 w-1.5" fill="#3060b0">
          <path d="M0 0h6L3 4z" />
        </svg>
        <div className="h-0 w-[484px] border-t border-dotted border-[#4070a0]" />
        <svg viewBox="0 0 6 4" className="h-1 w-1.5" fill="#3060b0">
          <path d="M0 0h6L3 4z" />
        </svg>
      </div>

      <main className="flex justify-center gap-1 border-b border-[#808080] pt-1 pb-px">
        <ChannelGroup />
        <FrequencyGroup />
        <SyncGroup />
        <ControlGroup />
      </main>

      <footer className="mt-[3px] flex flex-1 gap-[3px]">
        <div className="w-[190px] border border-[#aca899] border-r-white border-b-white pl-[3px] whitespace-nowrap">
          USB Осциллограф не подключен
        </div>
        <div className="flex-1 border border-[#aca899] border-b-white" />
      </footer>
    </div>
  );
};

export default App;
